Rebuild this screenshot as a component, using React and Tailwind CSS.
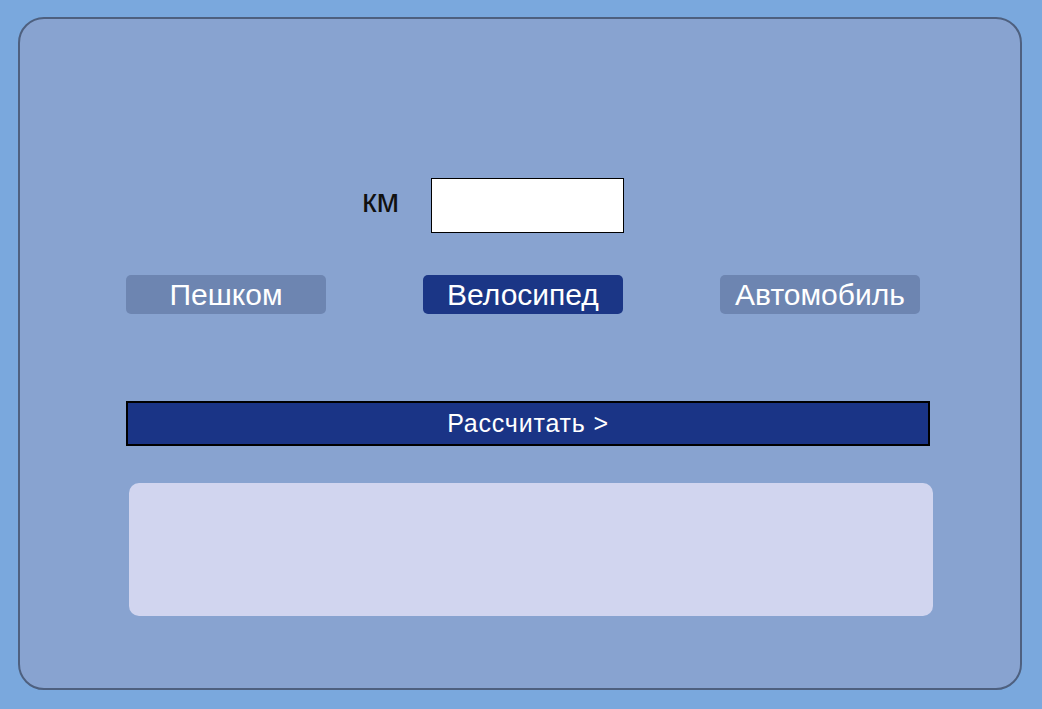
import React from 'react';

const modes = ['Пешком', 'Велосипед', 'Автомобиль'];

export default function App() {
  const active = 'Велосипед';
  return (
    <div className="w-full h-[709px] bg-[#7aa8dd] pt-[17px] pl-[18px] font-['Liberation_Sans',Arial,sans-serif]">
      <div className="w-[1004px] h-[673px] rounded-[26px] border-2 border-[#4e607f] bg-[#88a3d0] flex flex-col pl-[106px] pt-[159px]">
        {/* distance input */}
        <div className="flex items-center h-[55px] pl-[236px]">
          <span className="text-[33px] leading-none text-[#111] w-[69px] -mt-[10px]">км</span>
          <input className="w-[193px] h-[55px] bg-white border border-black outline-none px-2" />
        </div>

        {/* transport modes */}
        <div className="flex gap-[97px] mt-[42px]">
          {modes.map((m) => (
            <button
              key={m}
              className={`w-[200px] h-[39px] rounded-[5px] text-white text-[30px] leading-none ${
                m === active ? 'bg-[#1b3686]' : 'bg-[#6d85b1]'
              }`}
            >
              {m}
            </button>
          ))}
        </div>

        <button className="mt-[87px] w-[804px] h-[45px] bg-[#1a3486] border-2 border-black text-white text-[25px] tracking-[0.8px]">
          Рассчитать &gt;
        </button>

        <div className="mt-[37px] ml-[3px] w-[804px] h-[133px] rounded-[10px] bg-[#d1d5ef]"></div>
      </div>
    </div>
  );
}
